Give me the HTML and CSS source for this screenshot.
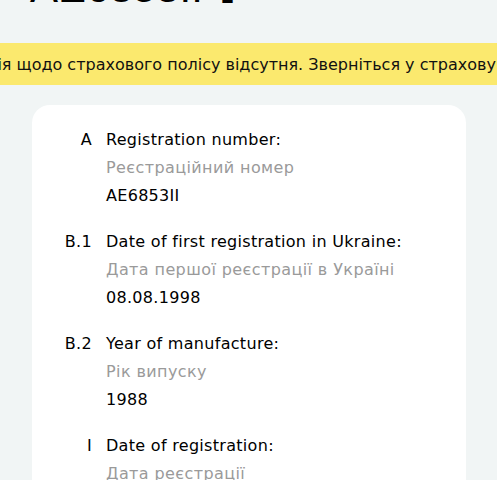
FILE: index.html
```html
<!DOCTYPE html>
<html lang="uk">
<head>
<meta charset="utf-8">
<link rel="stylesheet" href="styles.css">
</head>
<body>
<div class="page">
  <h1 class="title">AE6853II <span class="dash">-</span></h1>
  <div class="banner"><span>Інформація щодо страхового полісу відсутня. Зверніться у страхову компанію</span></div>
  <div class="card">
    <div class="row">
      <div class="code">A</div>
      <div class="info">
        <div class="en">Registration number:</div>
        <div class="ua">Реєстраційний номер</div>
        <div class="val">AE6853II</div>
      </div>
    </div>
    <div class="row">
      <div class="code">B.1</div>
      <div class="info">
        <div class="en">Date of first registration in Ukraine:</div>
        <div class="ua">Дата першої реєстрації в Україні</div>
        <div class="val">08.08.1998</div>
      </div>
    </div>
    <div class="row">
      <div class="code">B.2</div>
      <div class="info">
        <div class="en">Year of manufacture:</div>
        <div class="ua">Рік випуску</div>
        <div class="val">1988</div>
      </div>
    </div>
    <div class="row">
      <div class="code">I</div>
      <div class="info">
        <div class="en">Date of registration:</div>
        <div class="ua">Дата реєстрації</div>
        <div class="val">08.08.1998</div>
      </div>
    </div>
  </div>
</div>
</body>
</html>
```
FILE: styles.css
```css
html, body {
  margin: 0;
  padding: 0;
  background: #f1f5f5;
  overflow: hidden;
}
.page {
  width: 497px;
  font-family: "DejaVu Sans", Inter, sans-serif;
  color: #000;
}
.title {
  margin: -36px 0 0 0;
  padding-left: 30px;
  height: 48px;
  font-family: "Liberation Sans", Arial, sans-serif;
  font-size: 42px;
  line-height: 48px;
  font-weight: 400;
  white-space: nowrap;
}
.dash {
  margin-left: 6px;
  vertical-align: -11px;
}
.banner {
  margin-top: 31px;
  height: 42px;
  background: #fbe96e;
  display: flex;
  justify-content: center;
  align-items: center;
  overflow: hidden;
  white-space: nowrap;
  font-size: 16px;
  color: #111;
}
.card {
  margin: 20px 31px 0 32px;
  background: #fff;
  border-radius: 18px;
  padding: 21px 0 0 0;
}
.row {
  display: flex;
  gap: 14px;
  padding-bottom: 18px;
}
.code {
  width: 60px;
  text-align: right;
  font-size: 16px;
  line-height: 28px;
  letter-spacing: 0.3px;
}
.info {
  display: flex;
  flex-direction: column;
}
.en, .val {
  font-size: 16px;
  line-height: 28px;
  letter-spacing: 0.3px;
}
.ua {
  font-size: 16px;
  line-height: 28px;
  letter-spacing: 0.4px;
  color: #9a9a9a;
}
```
